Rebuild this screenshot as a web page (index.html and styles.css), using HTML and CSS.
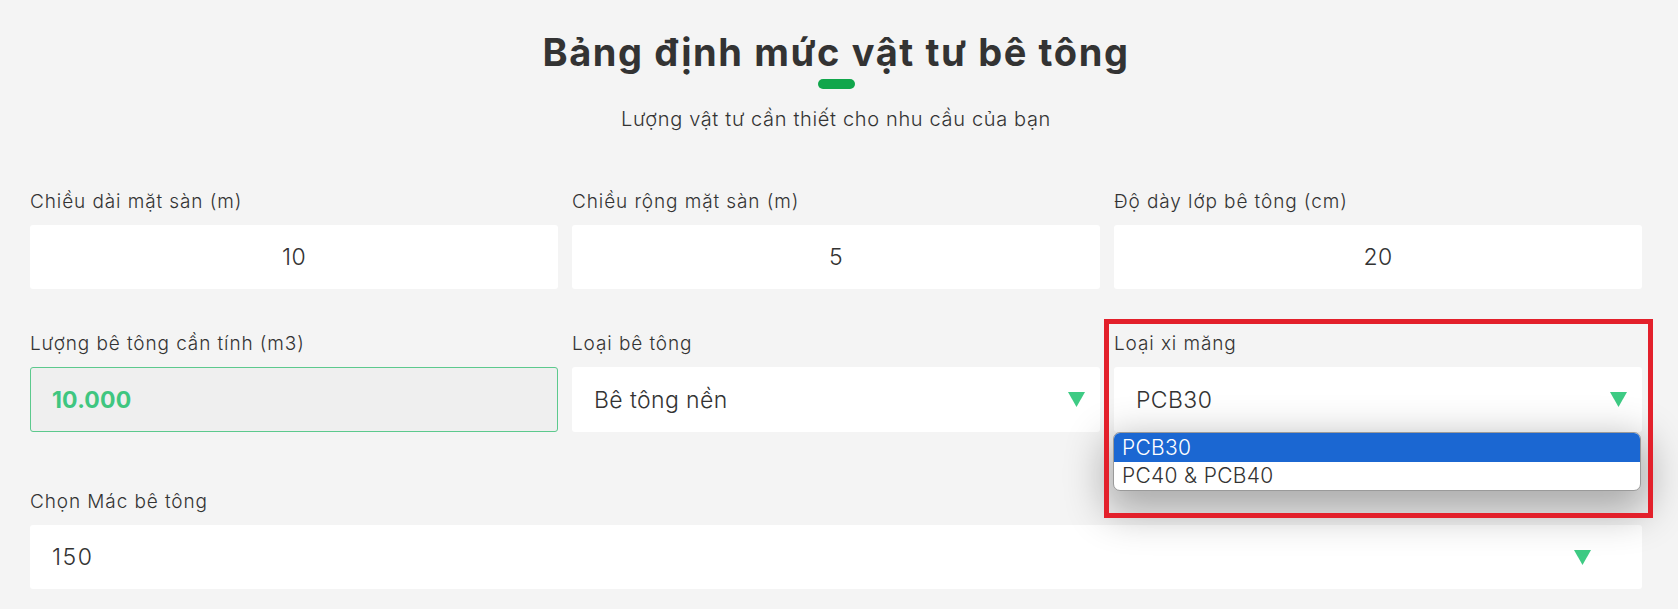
FILE: index.html
```html
<!DOCTYPE html>
<html lang="vi">
<head>
<meta charset="utf-8">
<title>Bảng định mức vật tư bê tông</title>
<link rel="stylesheet" href="styles.css">
</head>
<body>
<main class="page">
  <h1 class="title">Bảng định mức vật tư bê tông</h1>
  <div class="bar"></div>
  <p class="sub">Lượng vật tư cần thiết cho nhu cầu của bạn</p>

  <div class="grid">
    <div class="field">
      <div class="label">Chiều dài mặt sàn (m)</div>
      <div class="box center">10</div>
    </div>
    <div class="field">
      <div class="label">Chiều rộng mặt sàn (m)</div>
      <div class="box center">5</div>
    </div>
    <div class="field">
      <div class="label">Độ dày lớp bê tông (cm)</div>
      <div class="box center">20</div>
    </div>

    <div class="field">
      <div class="label">Lượng bê tông cần tính (m3)</div>
      <div class="box result">10.000</div>
    </div>
    <div class="field">
      <div class="label">Loại bê tông</div>
      <div class="box select">
        <span>Bê tông nền</span>
        <svg class="arrow" width="17" height="15" viewBox="0 0 17 15"><polygon points="0,0 17,0 8.5,15"/></svg>
      </div>
    </div>
    <div class="field open">
      <div class="label">Loại xi măng</div>
      <div class="box select">
        <span>PCB30</span>
        <svg class="arrow" width="17" height="15" viewBox="0 0 17 15"><polygon points="0,0 17,0 8.5,15"/></svg>
      </div>
      <div class="dropdown">
        <div class="opt selected">PCB30</div>
        <div class="opt">PC40 &amp; PCB40</div>
      </div>
      <div class="highlight"></div>
    </div>

    <div class="field wide">
      <div class="label">Chọn Mác bê tông</div>
      <div class="box select far">
        <span>150</span>
        <svg class="arrow" width="17" height="15" viewBox="0 0 17 15"><polygon points="0,0 17,0 8.5,15"/></svg>
      </div>
    </div>
  </div>
</main>
</body>
</html>
```
FILE: styles.css
```css
html, body {
  margin: 0;
  padding: 0;
  background: #f4f4f4;
}
body {
  font-family: Inter, Roboto, "Liberation Sans", Arial, sans-serif;
  color: #333;
  overflow: hidden;
}
.page {
  padding: 29px 36px 0 30px;
}
.title {
  margin: 0;
  font-size: 38px;
  line-height: 46px;
  font-weight: 700;
  text-align: center;
  color: #333;
  letter-spacing: 1.6px;
}
.bar {
  width: 37px;
  height: 10px;
  margin: 4px auto 0;
  border-radius: 5px;
  background: #10a64b;
}
.sub {
  margin: 17px 0 0;
  font-size: 20px;
  line-height: 26px;
  font-weight: 300;
  text-align: center;
  color: #333;
  letter-spacing: 0.65px;
}
.grid {
  margin-top: 56px;
  display: grid;
  grid-template-columns: repeat(3, 1fr);
  column-gap: 14px;
  row-gap: 41px;
}
.field {
  display: flex;
  flex-direction: column;
  position: relative;
}
.field.wide {
  grid-column: 1 / -1;
  margin-top: 15px;
}
.label {
  font-size: 19px;
  line-height: 24px;
  padding-top: 2px;
  margin-bottom: 11px;
  font-weight: 300;
  color: #333;
  letter-spacing: 0.9px;
}
.box {
  height: 64px;
  box-sizing: border-box;
  background: #fff;
  border-radius: 3px;
  font-size: 23px;
  font-weight: 300;
  color: #333;
  display: flex;
  align-items: center;
  letter-spacing: 0.4px;
}
.box.center {
  justify-content: center;
}
.box.result {
  background: #efefef;
  border: 1px solid #5cc98d;
  padding-left: 21px;
  height: 65px;
  color: #3fc680;
  font-weight: 700;
  font-size: 23px;
  letter-spacing: 0.2px;
}
.box.select {
  justify-content: space-between;
  padding: 0 15px 0 22px;
  height: 65px;
}
.box.select.far {
  padding-right: 51px;
  height: 64px;
}
.box.select.far span {
  letter-spacing: 1.5px;
}
.arrow {
  display: block;
}
.arrow polygon {
  fill: #3ecb84;
}
.dropdown {
  position: absolute;
  top: 102px;
  left: -1px;
  right: 1px;
  background: #fff;
  border: 1px solid #9a9a9a;
  border-radius: 7px;
  overflow: hidden;
  box-shadow: 0 14px 40px 8px rgba(0, 0, 0, 0.3);
  z-index: 2;
}
.opt {
  height: 28px;
  line-height: 28px;
  padding-left: 8px;
  font-size: 21px;
  font-weight: 300;
  color: #333;
  letter-spacing: 0.3px;
}
.opt.selected {
  background: #1b67d2;
  color: #fff;
  height: 29px;
  line-height: 29px;
}
.highlight {
  position: absolute;
  top: -11px;
  left: -10px;
  right: -11px;
  height: 199px;
  box-sizing: border-box;
  border: 5px solid #e3202b;
  z-index: 3;
  pointer-events: none;
}
```
